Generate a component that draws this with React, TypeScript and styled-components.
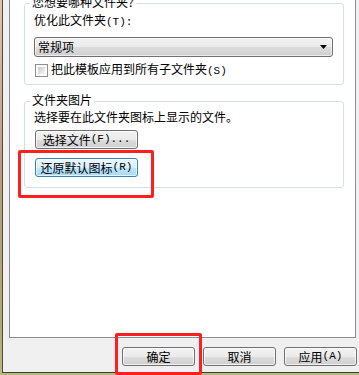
import React from "react";
import styled, { createGlobalStyle } from "styled-components";

const Global = createGlobalStyle`
  html, body { margin: 0; padding: 0; }
  body {
    font-family: "Noto Sans CJK SC", "Noto Sans", sans-serif;
    font-size: 12px;
    color: #000;
  }
  #root { width: 359px; height: 375px; overflow: hidden; }
`;

const Frame = styled.div`
  position: relative;
  width: 359px;
  height: 375px;
  box-sizing: border-box;
  padding: 0 0 2px 2px;
  display: flex;
  background: linear-gradient(to bottom, #dcc6b0 0%, #b89e80 45%, #a9ab72 85%, #b6b982 100%);
`;

const Dialog = styled.div`
  flex: 1;
  display: flex;
  flex-direction: column;
  background: #f0f0f0;
  border-left: 1px solid #55483c;
  border-bottom: 1px solid #3f3f33;
  padding: 0 2px 6px 6px;
`;

const Panel = styled.div`
  width: 347px;
  height: 338px;
  box-sizing: border-box;
  background: #fff;
  border: 1px solid #898c95;
  border-top: none;
  padding: 0 11px 0 14px;
  display: flex;
  flex-direction: column;
`;

const Group = styled.div<{ $top: number; $bottom: number }>`
  margin-top: ${(p) => p.$top}px;
  border: 1px solid #d5dfe5;
  border-radius: 3px;
  padding: 0 10px ${(p) => p.$bottom}px 9px;
  display: flex;
  flex-direction: column;
  align-items: flex-start;
`;

const Legend = styled.div`
  margin: -9px 0 0 -4px;
  padding: 0 2px;
  background: #fff;
  line-height: 14px;
  white-space: nowrap;
`;

const Text = styled.div<{ $top: number }>`
  margin-top: ${(p) => p.$top}px;
  line-height: 14px;
  white-space: nowrap;
`;

const Mn = styled.span`
  font-family: "Liberation Mono", monospace;
  font-size: 11px;
`;

const Select = styled.div`
  margin-top: 8px;
  align-self: stretch;
  height: 20px;
  box-sizing: border-box;
  border: 1px solid #707070;
  border-radius: 3px;
  background: linear-gradient(to bottom, #f2f2f2 0%, #ebebeb 50%, #dddddd 50%, #cfcfcf 100%);
  box-shadow: inset 0 0 0 1px rgba(255, 255, 255, 0.6);
  display: flex;
  align-items: center;
  justify-content: space-between;
  padding: 0 5px 0 3px;
  line-height: 14px;
`;

const CheckRow = styled.label`
  margin-top: 6px;
  height: 14px;
  display: flex;
  align-items: center;
  gap: 3px;
  line-height: 14px;
  white-space: nowrap;
  margin-left: 1px;
`;

const CheckBox = styled.span`
  width: 13px;
  height: 13px;
  box-sizing: border-box;
  border: 1px solid #8e8f8f;
  padding: 2px;
  background: linear-gradient(135deg, #c4c8ce 0%, #e4e6e9 60%, #f7f7f7 100%) content-box, #fff;
  box-shadow: inset 0 0 0 2px #fff;
`;

const Button = styled.button<{ $w: number; $focus?: boolean }>`
  width: ${(p) => p.$w}px;
  height: 19px;
  box-sizing: border-box;
  margin: 0;
  padding: 0;
  font: inherit;
  font-size: 12px;
  line-height: 15px;
  color: #000;
  white-space: nowrap;
  border: 1px solid ${(p) => (p.$focus ? "#3c7fb1" : "#707070")};
  border-radius: 3px;
  background: ${(p) =>
    p.$focus
      ? "linear-gradient(to bottom, #eaf6fd 0%, #d9f0fc 50%, #bee6fd 50%, #a7d9f5 100%)"
      : "linear-gradient(to bottom, #f2f2f2 0%, #ebebeb 50%, #dddddd 50%, #cfcfcf 100%)"};
  box-shadow: inset 0 0 0 1px rgba(255, 255, 255, 0.7);
  display: flex;
  align-items: center;
  justify-content: center;
`;

const Slot = styled.div<{ $top: number }>`
  position: relative;
  margin-top: ${(p) => p.$top}px;
  margin-left: 1px;
  display: flex;
`;

const Footer = styled.div`
  margin-top: 9px;
  display: flex;
  justify-content: flex-end;
  gap: 8px;
`;

const FooterSlot = styled.div`
  position: relative;
  display: flex;
`;

const Highlight = styled.span<{ $t: number; $r: number; $b: number; $l: number }>`
  position: absolute;
  top: ${(p) => p.$t}px;
  right: ${(p) => p.$r}px;
  bottom: ${(p) => p.$b}px;
  left: ${(p) => p.$l}px;
  border: 3px solid #ff1f1f;
  border-radius: 2px;
  pointer-events: none;
`;

const Arrow = () => (
  <svg width="7" height="4" viewBox="0 0 7 4">
    <path d="M0 0H7L3.5 4Z" fill="#000" />
  </svg>
);

export default function App() {
  return (
    <>
      <Global />
      <Frame>
        <Dialog>
          <Panel>
            <Group $top={3} $bottom={7}>
              <Legend>您想要哪种文件夹?</Legend>
              <Text $top={4}>
                优化此文件夹<Mn>(T):</Mn>
              </Text>
              <Select>
                <span>常规项</span>
                <Arrow />
              </Select>
              <CheckRow>
                <CheckBox />
                <span>
                  把此模板应用到所有子文件夹<Mn>(S)</Mn>
                </span>
              </CheckRow>
            </Group>
            <Group $top={16} $bottom={10}>
              <Legend>文件夹图片</Legend>
              <Text $top={3}>选择要在此文件夹图标上显示的文件。</Text>
              <Slot $top={6}>
                <Button $w={103}>
                  选择文件<Mn>(F)...</Mn>
                </Button>
              </Slot>
              <Slot $top={9}>
                <Button $w={103} $focus>
                  还原默认图标<Mn>(R)</Mn>
                </Button>
                <Highlight $t={-8} $r={-16} $b={-21} $l={-17} />
              </Slot>
            </Group>
          </Panel>
          <Footer>
            <FooterSlot>
              <Button $w={73}>确定</Button>
              <Highlight $t={-14} $r={-7} $b={-9} $l={-7} />
            </FooterSlot>
            <FooterSlot>
              <Button $w={73}>取消</Button>
            </FooterSlot>
            <FooterSlot>
              <Button $w={73}>
                应用<Mn>(A)</Mn>
              </Button>
            </FooterSlot>
          </Footer>
        </Dialog>
      </Frame>
    </>
  );
}
